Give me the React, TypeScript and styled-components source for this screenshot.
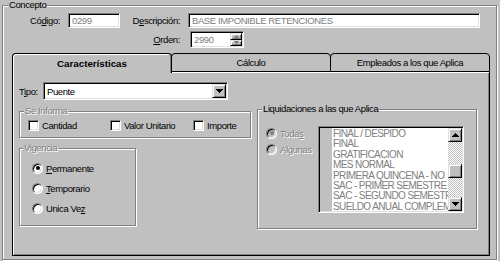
import React from 'react';
import styled, { createGlobalStyle } from 'styled-components';

const FACE = '#c0c0c0';
const SHADOW = '#808080';
const LIGHT = '#dfdfdf';
const SANS = '"Liberation Sans", Arial, sans-serif';

const GlobalStyle = createGlobalStyle`
  html, body {
    margin: 0;
    padding: 0;
    background: ${FACE};
  }
  body {
    font-family: ${SANS};
    font-size: 9.5px;
    letter-spacing: -0.4px;
    color: #000;
  }
  * {
    box-sizing: border-box;
  }
`;

const Screen = styled.div`
  width: 500px;
  height: 261px;
  padding: 0 3px 0 2px;
  overflow: hidden;
`;

const Group = styled.fieldset<{ $w?: number; $h: number }>`
  margin: 0;
  padding: 0;
  min-width: 0;
  width: ${(p) => (p.$w ? `${p.$w}px` : 'auto')};
  height: ${(p) => p.$h}px;
  border: 1px solid ${SHADOW};
  box-shadow: inset 1px 1px 0 #fff, 1px 1px 0 #fff;
`;

const Caption = styled.legend<{ $muted?: boolean; $indent?: number }>`
  margin-left: ${(p) => p.$indent ?? 4}px;
  padding: 0 1px;
  height: 10px;
  line-height: 10px;
  background: ${FACE};
  color: ${(p) => (p.$muted ? SHADOW : '#000')};
  text-shadow: ${(p) => (p.$muted ? '1px 1px 0 #fff' : 'none')};
`;

const Key = styled.span`
  text-decoration: underline;
`;

const HeaderGrid = styled.div`
  display: grid;
  grid-template-columns: 57px 52px 52px 292px;
  grid-template-rows: 15px 17px;
  column-gap: 8px;
  row-gap: 3px;
  margin-top: 3px;
`;

const FieldLabel = styled.label<{ $col?: number; $row?: number }>`
  grid-column: ${(p) => p.$col ?? 'auto'};
  grid-row: ${(p) => p.$row ?? 'auto'};
  align-self: center;
  justify-self: end;
  white-space: nowrap;
`;

const TextBox = styled.div<{ $w?: number }>`
  display: flex;
  align-items: center;
  height: 100%;
  width: ${(p) => (p.$w ? `${p.$w}px` : '100%')};
  background: #fff;
  border: 1px solid;
  border-color: ${SHADOW} #fff #fff ${SHADOW};
  box-shadow: inset 1px 1px 0 #000, inset -1px -1px 0 ${LIGHT};
  padding: 0 1px 0 3px;
  overflow: hidden;
  white-space: nowrap;
`;

const SpinBox = styled(TextBox)`
  grid-column: 4;
  grid-row: 2;
  margin-left: 2px;
`;

const Value = styled.span<{ $muted?: boolean }>`
  flex: 1;
  color: ${(p) => (p.$muted ? SHADOW : '#000')};
`;

const SpinButtons = styled.div`
  display: flex;
  flex-direction: column;
  width: 12px;
  height: 13px;
`;

const RaisedButton = styled.div<{ $w?: number; $h?: number }>`
  display: flex;
  align-items: center;
  justify-content: center;
  flex: ${(p) => (p.$h ? 'none' : 1)};
  width: ${(p) => (p.$w ? `${p.$w}px` : 'auto')};
  height: ${(p) => (p.$h ? `${p.$h}px` : 'auto')};
  background: ${FACE};
  border: 1px solid;
  border-color: ${LIGHT} #000 #000 ${LIGHT};
  box-shadow: inset 1px 1px 0 #fff, inset -1px -1px 0 ${SHADOW};
`;

const TabControl = styled.div`
  width: 478px;
  margin: 5px 0 0 9px;
`;

const TabStrip = styled.div`
  display: flex;
  align-items: flex-start;
  height: 19px;
`;

const Tab = styled.div<{ $active?: boolean }>`
  position: relative;
  z-index: ${(p) => (p.$active ? 1 : 0)};
  flex: 1;
  margin-left: -1px;
  &:first-child {
    margin-left: 0;
  }
  height: ${(p) => (p.$active ? 20 : 19)}px;
  display: flex;
  align-items: center;
  justify-content: center;
  background: ${FACE};
  border: 1px solid #000;
  border-bottom: ${(p) => (p.$active ? 'none' : '1px solid #000')};
  border-radius: 4px 4px 0 0;
  box-shadow: ${(p) => (p.$active ? `inset 1px 1px 0 #fff, inset -1px 0 0 ${SHADOW}` : 'none')};
  font-weight: ${(p) => (p.$active ? 700 : 400)};
  font-size: ${(p) => (p.$active ? '9.75px' : '9.5px')};
  letter-spacing: ${(p) => (p.$active ? '0' : '-0.4px')};
  padding-bottom: ${(p) => (p.$active ? 1 : 0)}px;
`;

const TabPanel = styled.div`
  height: 184px;
  border: 1px solid #000;
  border-top: none;
  box-shadow: inset 1px 1px 0 #fff, inset -1px -1px 0 ${SHADOW};
  padding: 10px 0 0 6px;
`;

const TipoRow = styled.div`
  display: flex;
  align-items: center;
  height: 18px;
`;

const TipoLabel = styled.label`
  width: 24px;
`;

const PanelBody = styled.div`
  display: grid;
  grid-template-columns: 232px 220px;
  column-gap: 6px;
  align-items: start;
  margin-top: 4px;
`;

const LeftColumn = styled.div`
  display: flex;
  flex-direction: column;
  gap: 5px;
  margin-top: 2px;
`;

const CheckRow = styled.div`
  display: flex;
  align-items: center;
  padding: 4px 0 0 8px;
`;

const CheckItem = styled.label<{ $w?: number }>`
  display: flex;
  align-items: center;
  gap: 3px;
  width: ${(p) => (p.$w ? `${p.$w}px` : 'auto')};
  height: 11px;
  white-space: nowrap;
`;

const CheckBox = styled.span`
  width: 11px;
  height: 11px;
  flex: none;
  background: #fff;
  border: 1px solid;
  border-color: ${SHADOW} #fff #fff ${SHADOW};
  box-shadow: inset 1px 1px 0 #000, inset -1px -1px 0 ${LIGHT};
`;

const RadioList = styled.div<{ $pad: string; $w?: number }>`
  display: flex;
  flex-direction: column;
  flex: none;
  width: ${(p) => (p.$w ? `${p.$w}px` : 'auto')};
  padding: ${(p) => p.$pad};
`;

const RadioItem = styled.label<{ $h: number; $muted?: boolean }>`
  display: flex;
  align-items: center;
  gap: 3px;
  height: ${(p) => p.$h}px;
  white-space: nowrap;
  color: ${(p) => (p.$muted ? SHADOW : '#000')};
  text-shadow: ${(p) => (p.$muted ? '1px 1px 0 #fff' : 'none')};
`;

const RadioDot = styled.span<{ $checked?: boolean; $muted?: boolean }>`
  display: grid;
  place-items: center;
  width: 11px;
  height: 11px;
  flex: none;
  border-radius: 50%;
  background: ${(p) => (p.$muted ? FACE : '#fff')};
  border: 1px solid;
  border-color: ${SHADOW} #fff #fff ${SHADOW};
  box-shadow: inset 1px 1px 0 #000, inset -1px -1px 0 ${LIGHT};
  &::after {
    content: '';
    width: 4px;
    height: 4px;
    border-radius: 50%;
    background: ${(p) => (p.$checked ? (p.$muted ? SHADOW : '#000') : 'transparent')};
  }
`;

const LiquidRow = styled.div`
  display: flex;
  align-items: flex-start;
  padding: 11px 0 0 8px;
`;

const ListBox = styled.div`
  display: flex;
  width: 146px;
  height: 87px;
  margin-top: 1px;
  background: #fff;
  border: 1px solid;
  border-color: ${SHADOW} #fff #fff ${SHADOW};
  box-shadow: inset 1px 1px 0 #000, inset -1px -1px 0 ${LIGHT};
  padding: 1px;
`;

const Gutter = styled.div`
  width: 12px;
  flex: none;
  background: ${FACE};
`;

const Items = styled.div`
  flex: 1;
  min-width: 0;
  overflow: hidden;
  padding: 1px 0 0 1px;
  font-size: 10px;
  letter-spacing: -0.6px;
  line-height: 10.4px;
  color: ${SHADOW};
  white-space: nowrap;
`;

const ScrollBar = styled.div`
  display: flex;
  flex-direction: column;
  flex: none;
  width: 14px;
`;

const Track = styled.div`
  flex: 1;
  padding-top: 22px;
  background-color: ${FACE};
  background-image: repeating-conic-gradient(#fff 0 25%, ${FACE} 0 50%);
  background-size: 2px 2px;
`;

const Arrow = ({ up, color = '#000', w = 7 }: { up?: boolean; color?: string; w?: number }) => {
  const h = Math.ceil(w / 2);
  return (
    <svg width={w} height={h} viewBox={`0 0 ${w} ${h}`} shapeRendering="crispEdges">
      <polygon points={up ? `0,${h} ${w},${h} ${w / 2},0` : `0,0 ${w},0 ${w / 2},${h}`} fill={color} />
    </svg>
  );
};

const liquidaciones = [
  'FINAL / DESPIDO',
  'FINAL',
  'GRATIFICACION',
  'MES NORMAL',
  'PRIMERA QUINCENA - NO',
  'SAC - PRIMER SEMESTRE',
  'SAC - SEGUNDO SEMESTRE',
  'SUELDO ANUAL COMPLEMENTARIO',
];

export default function App() {
  return (
    <>
      <GlobalStyle />
      <Screen>
        <Group $h={260}>
          <Caption $indent={5}>Concepto</Caption>
          <HeaderGrid>
            <FieldLabel>
              Có<Key>d</Key>igo:
            </FieldLabel>
            <TextBox>
              <Value $muted>0299</Value>
            </TextBox>
            <FieldLabel>
              D<Key>e</Key>scripción:
            </FieldLabel>
            <TextBox>
              <Value $muted>BASE IMPONIBLE RETENCIONES</Value>
            </TextBox>
            <FieldLabel $col={3} $row={2}>
              <Key>O</Key>rden:
            </FieldLabel>
            <SpinBox $w={54}>
              <Value $muted>2990</Value>
              <SpinButtons>
                <RaisedButton>
                  <Arrow up w={5} color={SHADOW} />
                </RaisedButton>
                <RaisedButton>
                  <Arrow w={5} color={SHADOW} />
                </RaisedButton>
              </SpinButtons>
            </SpinBox>
          </HeaderGrid>

          <TabControl>
            <TabStrip>
              <Tab $active>Características</Tab>
              <Tab>Cálculo</Tab>
              <Tab>Empleados a los que Aplica</Tab>
            </TabStrip>
            <TabPanel>
              <TipoRow>
                <TipoLabel>
                  T<Key>i</Key>po:
                </TipoLabel>
                <TextBox $w={185}>
                  <Value>Puente</Value>
                  <RaisedButton $w={14} $h={14}>
                    <Arrow />
                  </RaisedButton>
                </TextBox>
              </TipoRow>

              <PanelBody>
                <LeftColumn>
                  <Group $h={32}>
                    <Caption $muted>Se Informa</Caption>
                    <CheckRow>
                      <CheckItem $w={82}>
                        <CheckBox />
                        Cantidad
                      </CheckItem>
                      <CheckItem $w={83}>
                        <CheckBox />
                        Valor Unitario
                      </CheckItem>
                      <CheckItem>
                        <CheckBox />
                        Importe
                      </CheckItem>
                    </CheckRow>
                  </Group>

                  <Group $w={117} $h={83}>
                    <Caption $muted $indent={3}>
                      Vigencia
                    </Caption>
                    <RadioList $pad="5px 0 0 12px">
                      <RadioItem $h={20}>
                        <RadioDot $checked />
                        <span>
                          <Key>P</Key>ermanente
                        </span>
                      </RadioItem>
                      <RadioItem $h={20}>
                        <RadioDot />
                        <span>
                          <Key>T</Key>emporario
                        </span>
                      </RadioItem>
                      <RadioItem $h={20}>
                        <RadioDot />
                        <span>
                          Unica Ve<Key>z</Key>
                        </span>
                      </RadioItem>
                    </RadioList>
                  </Group>
                </LeftColumn>

                <Group $h={125}>
                  <Caption>Liquidaciones a las que Aplica</Caption>
                  <LiquidRow>
                    <RadioList $pad="0" $w={52}>
                      <RadioItem $h={16} $muted>
                        <RadioDot $checked $muted />
                        <span>
                          Toda<Key>s</Key>
                        </span>
                      </RadioItem>
                      <RadioItem $h={16} $muted>
                        <RadioDot $muted />
                        <span>Algunas</span>
                      </RadioItem>
                    </RadioList>
                    <ListBox>
                      <Gutter />
                      <Items>
                        {liquidaciones.map((name) => (
                          <div key={name}>{name}</div>
                        ))}
                      </Items>
                      <ScrollBar>
                        <RaisedButton $h={14}>
                          <Arrow up />
                        </RaisedButton>
                        <Track>
                          <RaisedButton $h={14} />
                        </Track>
                        <RaisedButton $h={14}>
                          <Arrow />
                        </RaisedButton>
                      </ScrollBar>
                    </ListBox>
                  </LiquidRow>
                </Group>
              </PanelBody>
            </TabPanel>
          </TabControl>
        </Group>
      </Screen>
    </>
  );
}
